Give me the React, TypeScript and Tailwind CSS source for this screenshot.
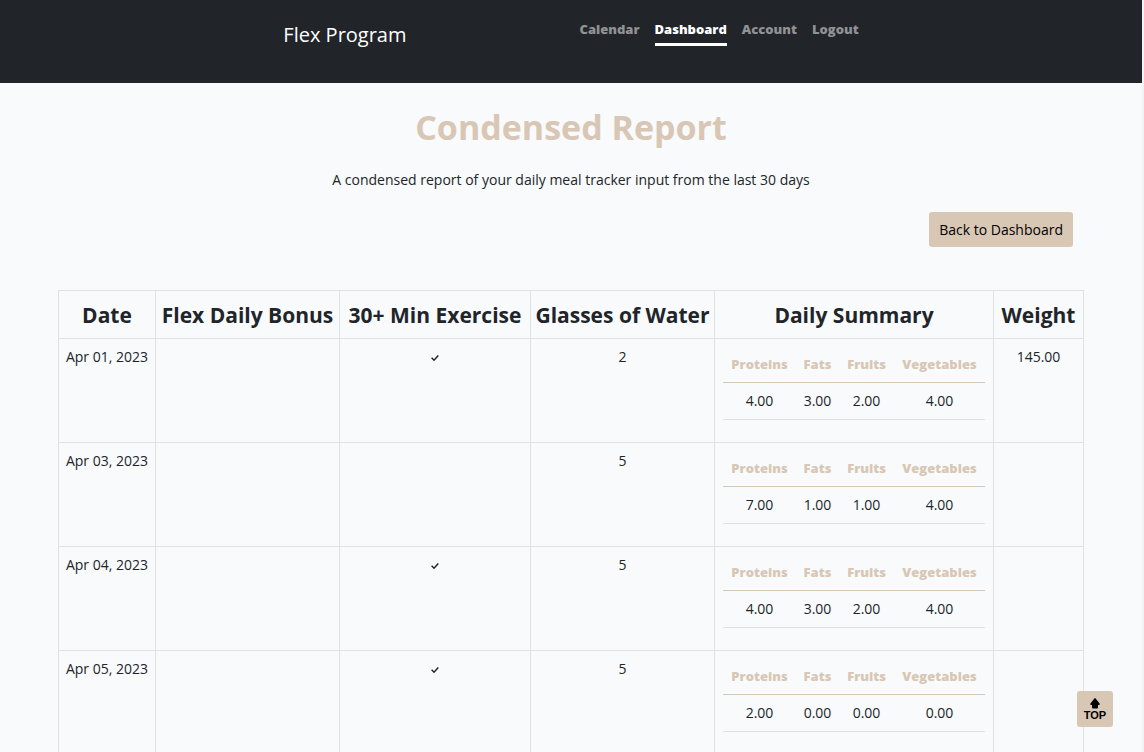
const navLinks = [
  { label: 'Calendar', active: false },
  { label: 'Dashboard', active: true },
  { label: 'Account', active: false },
  { label: 'Logout', active: false },
];

const summaryHeads = ['Proteins', 'Fats', 'Fruits', 'Vegetables'];

const days = [
  { date: 'Apr 01, 2023', exercise: true, water: 2, summary: ['4.00', '3.00', '2.00', '4.00'], weight: '145.00' },
  { date: 'Apr 03, 2023', exercise: false, water: 5, summary: ['7.00', '1.00', '1.00', '4.00'], weight: '' },
  { date: 'Apr 04, 2023', exercise: true, water: 5, summary: ['4.00', '3.00', '2.00', '4.00'], weight: '' },
  { date: 'Apr 05, 2023', exercise: true, water: 5, summary: ['2.00', '0.00', '0.00', '0.00'], weight: '' },
];

function Check() {
  return (
    <svg role="img" aria-label="Yes" viewBox="0 0 8 8" className="mx-auto mt-[7px] h-2 w-2" fill="none" stroke="#212529" strokeWidth="1.5">
      <path d="M0.6 3.8 L3 6.2 L7.3 1.4" />
    </svg>
  );
}

function SummaryTable({ values }: { values: string[] }) {
  return (
    <table className="mb-4 w-full table-fixed border-collapse">
      <colgroup>
        <col className="w-[73px]" />
        <col className="w-[43px]" />
        <col className="w-[55px]" />
        <col />
      </colgroup>
      <thead>
        <tr className="border-b border-[#d9c7b5] text-[#d9c7b5]">
          {summaryHeads.map((head) => (
            <th key={head} className="py-2 text-[13px] leading-5 font-extrabold">{head}</th>
          ))}
        </tr>
      </thead>
      <tbody>
        <tr className="border-b border-[#dee2e6]">
          {values.map((value, i) => (
            <td key={i} className="py-2 leading-5">{value}</td>
          ))}
        </tr>
      </tbody>
    </table>
  );
}

export default function App() {
  return (
    <div className="h-screen overflow-hidden border-r-2 border-[#f3f3f3] bg-[#f8fafc] font-['Open_Sans','Noto_Sans',sans-serif] text-[14px] leading-5 text-[#212529]">
      <header className="flex h-[83px] items-start justify-center gap-[173px] bg-[#212529]">
        <a href="#home" className="mt-5 text-xl leading-[30px] text-white">Flex Program</a>
        <nav className="mt-[19px] flex gap-[15px] text-[13px] font-extrabold">
          {navLinks.map((link) => (
            <a
              key={link.label}
              href={`#${link.label.toLowerCase()}`}
              aria-current={link.active ? 'page' : undefined}
              className={link.active ? 'border-b-3 border-white pb-1 text-white' : 'border-b-3 border-transparent pb-1 text-[#909294]'}
            >
              {link.label}
            </a>
          ))}
        </nav>
      </header>

      <main className="px-[58px]">
        <h1 className="pt-[22px] text-center text-[34px] leading-[44px] font-bold text-[#d9c7b5]">Condensed Report</h1>
        <p className="mt-[21px] text-center">A condensed report of your daily meal tracker input from the last 30 days</p>
        <div className="mt-[22px] flex justify-end pr-[11px]">
          <button type="button" className="h-[35px] rounded-[3px] bg-[#d9c7b5] px-[10px] text-black">Back to Dashboard</button>
        </div>

        <table className="mt-[43px] w-full table-fixed border-collapse text-center">
          <colgroup>
            <col className="w-[97px]" />
            <col className="w-[184px]" />
            <col className="w-[191px]" />
            <col className="w-[184px]" />
            <col />
            <col className="w-[90px]" />
          </colgroup>
          <thead>
            <tr className="h-12 text-[21px] leading-7 whitespace-nowrap">
              {['Date', 'Flex Daily Bonus', '30+ Min Exercise', 'Glasses of Water', 'Daily Summary', 'Weight'].map((head) => (
                <th key={head} className="border border-[#dee2e6] font-bold">{head}</th>
              ))}
            </tr>
          </thead>
          <tbody>
            {days.map((day) => (
              <tr key={day.date} className="h-[104px] align-top">
                <td className="border border-[#dee2e6] pt-2 whitespace-nowrap">{day.date}</td>
                <td className="border border-[#dee2e6]" />
                <td className="border border-[#dee2e6] pt-2">{day.exercise && <Check />}</td>
                <td className="border border-[#dee2e6] pt-2">{day.water}</td>
                <td className="border border-[#dee2e6] px-2 pt-[7px]"><SummaryTable values={day.summary} /></td>
                <td className="border border-[#dee2e6] pt-2">{day.weight}</td>
              </tr>
            ))}
          </tbody>
        </table>
      </main>

      <button type="button" className="fixed right-[31px] bottom-[25px] flex h-9 w-9 flex-col items-center justify-center rounded-[3px] bg-[#d9c7b5] font-['Liberation_Sans',sans-serif] text-[11px] leading-3 font-bold text-black">
        <svg aria-hidden="true" viewBox="0 0 10 11" className="h-[11px] w-[10px]" fill="currentColor">
          <path d="M5 0 Q5.4 0 5.8 0.7 L9.4 5.2 Q10.2 6.6 9 7 H8 V9.6 Q8 10.5 7 10.5 H3 Q2 10.5 2 9.6 V7 H1 Q-0.2 6.6 0.6 5.2 L4.2 0.7 Q4.6 0 5 0 Z" />
        </svg>
        TOP
      </button>
    </div>
  );
}
